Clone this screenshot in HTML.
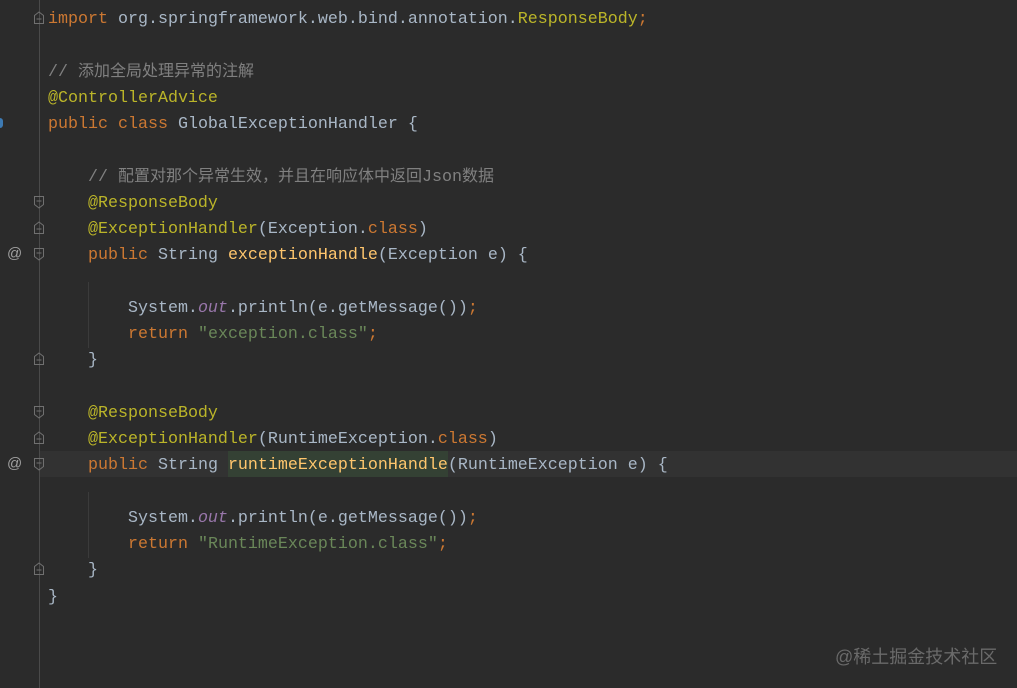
<!DOCTYPE html>
<html><head><meta charset="utf-8"><style>
body{margin:0;width:1017px;height:688px;background:#2b2b2b;overflow:hidden;position:relative;font-family:"Liberation Mono",monospace;}
.gl{position:absolute;left:39px;top:0;width:1px;height:688px;background:#4a4a4a;}
.cur{position:absolute;left:40px;top:451px;width:977px;height:26px;background:#323232;}
.hl{position:absolute;left:228px;top:451px;width:220px;height:26px;background:#344134;}
.code{position:absolute;left:48px;top:7px;font-size:16.67px;line-height:26.25px;color:#a9b7c6;white-space:pre;}
.code div{height:26.25px;}
.k{color:#cc7832}.a{color:#bbb529}.c{color:#808080}.s{color:#6a8759}.m{color:#ffc66d}.f{color:#9876aa;font-style:italic}
.cj{font-family:"Liberation Mono","Noto Sans CJK SC",monospace;font-size:16px;line-height:1;}
.at{position:absolute;left:7px;font-size:15px;color:#a0a0a0;font-family:"Liberation Sans",sans-serif;}
.ig{position:absolute;width:1px;background:#3b3b3b;}
.wm{position:absolute;left:835px;top:643px;font-size:18px;color:#6a6a6a;font-family:"Liberation Sans","Noto Sans CJK SC",sans-serif;}
svg.fd{position:absolute;left:33px;}
</style></head><body>
<div class="gl"></div>
<div class="cur"></div>
<div class="hl"></div>
<div class="ig" style="left:88px;top:282px;height:66px"></div>
<div class="ig" style="left:88px;top:492px;height:66px"></div>
<div style="position:absolute;left:0;top:118px;width:3px;height:10px;background:#3d7ab3;border-radius:0 3px 3px 0"></div>
<div class="at" style="top:245px">@</div>
<div class="at" style="top:455px">@</div>
<svg class="fd" style="top:11px" width="12" height="14"><path d="M1.5 12.5V4.5L6 1L10.5 4.5V12.5Z M3.5 8H8.5" fill="none" stroke="#707070"/></svg>
<svg class="fd" style="top:195px" width="12" height="14"><path d="M1.5 1.5V9.5L6 13L10.5 9.5V1.5Z M3.5 6H8.5" fill="none" stroke="#707070"/></svg>
<svg class="fd" style="top:221px" width="12" height="14"><path d="M1.5 12.5V4.5L6 1L10.5 4.5V12.5Z M3.5 8H8.5" fill="none" stroke="#707070"/></svg>
<svg class="fd" style="top:247px" width="12" height="14"><path d="M1.5 1.5V9.5L6 13L10.5 9.5V1.5Z M3.5 6H8.5" fill="none" stroke="#707070"/></svg>
<svg class="fd" style="top:352px" width="12" height="14"><path d="M1.5 12.5V4.5L6 1L10.5 4.5V12.5Z M3.5 8H8.5" fill="none" stroke="#707070"/></svg>
<svg class="fd" style="top:405px" width="12" height="14"><path d="M1.5 1.5V9.5L6 13L10.5 9.5V1.5Z M3.5 6H8.5" fill="none" stroke="#707070"/></svg>
<svg class="fd" style="top:431px" width="12" height="14"><path d="M1.5 12.5V4.5L6 1L10.5 4.5V12.5Z M3.5 8H8.5" fill="none" stroke="#707070"/></svg>
<svg class="fd" style="top:457px" width="12" height="14"><path d="M1.5 1.5V9.5L6 13L10.5 9.5V1.5Z M3.5 6H8.5" fill="none" stroke="#707070"/></svg>
<svg class="fd" style="top:562px" width="12" height="14"><path d="M1.5 12.5V4.5L6 1L10.5 4.5V12.5Z M3.5 8H8.5" fill="none" stroke="#707070"/></svg>
<div class="code"><div><span class="k">import</span> org.springframework.web.bind.annotation.<span class="a">ResponseBody</span><span class="k">;</span></div><div></div><div><span class="c">// <span class="cj">添加全局处理异常的注解</span></span></div><div><span class="a">@ControllerAdvice</span></div><div><span class="k">public class</span> GlobalExceptionHandler {</div><div></div><div>    <span class="c">// <span class="cj">配置对那个异常生效，并且在响应体中返回</span>Json<span class="cj">数据</span></span></div><div>    <span class="a">@ResponseBody</span></div><div>    <span class="a">@ExceptionHandler</span>(Exception.<span class="k">class</span>)</div><div>    <span class="k">public</span> String <span class="m">exceptionHandle</span>(Exception e) {</div><div></div><div>        System.<span class="f">out</span>.println(e.getMessage())<span class="k">;</span></div><div>        <span class="k">return</span> <span class="s">"exception.class"</span><span class="k">;</span></div><div>    }</div><div></div><div>    <span class="a">@ResponseBody</span></div><div>    <span class="a">@ExceptionHandler</span>(RuntimeException.<span class="k">class</span>)</div><div>    <span class="k">public</span> String <span class="m">runtimeExceptionHandle</span>(RuntimeException e) {</div><div></div><div>        System.<span class="f">out</span>.println(e.getMessage())<span class="k">;</span></div><div>        <span class="k">return</span> <span class="s">"RuntimeException.class"</span><span class="k">;</span></div><div>    }</div><div>}</div></div>
<div class="wm">@稀土掘金技术社区</div>
</body></html>
